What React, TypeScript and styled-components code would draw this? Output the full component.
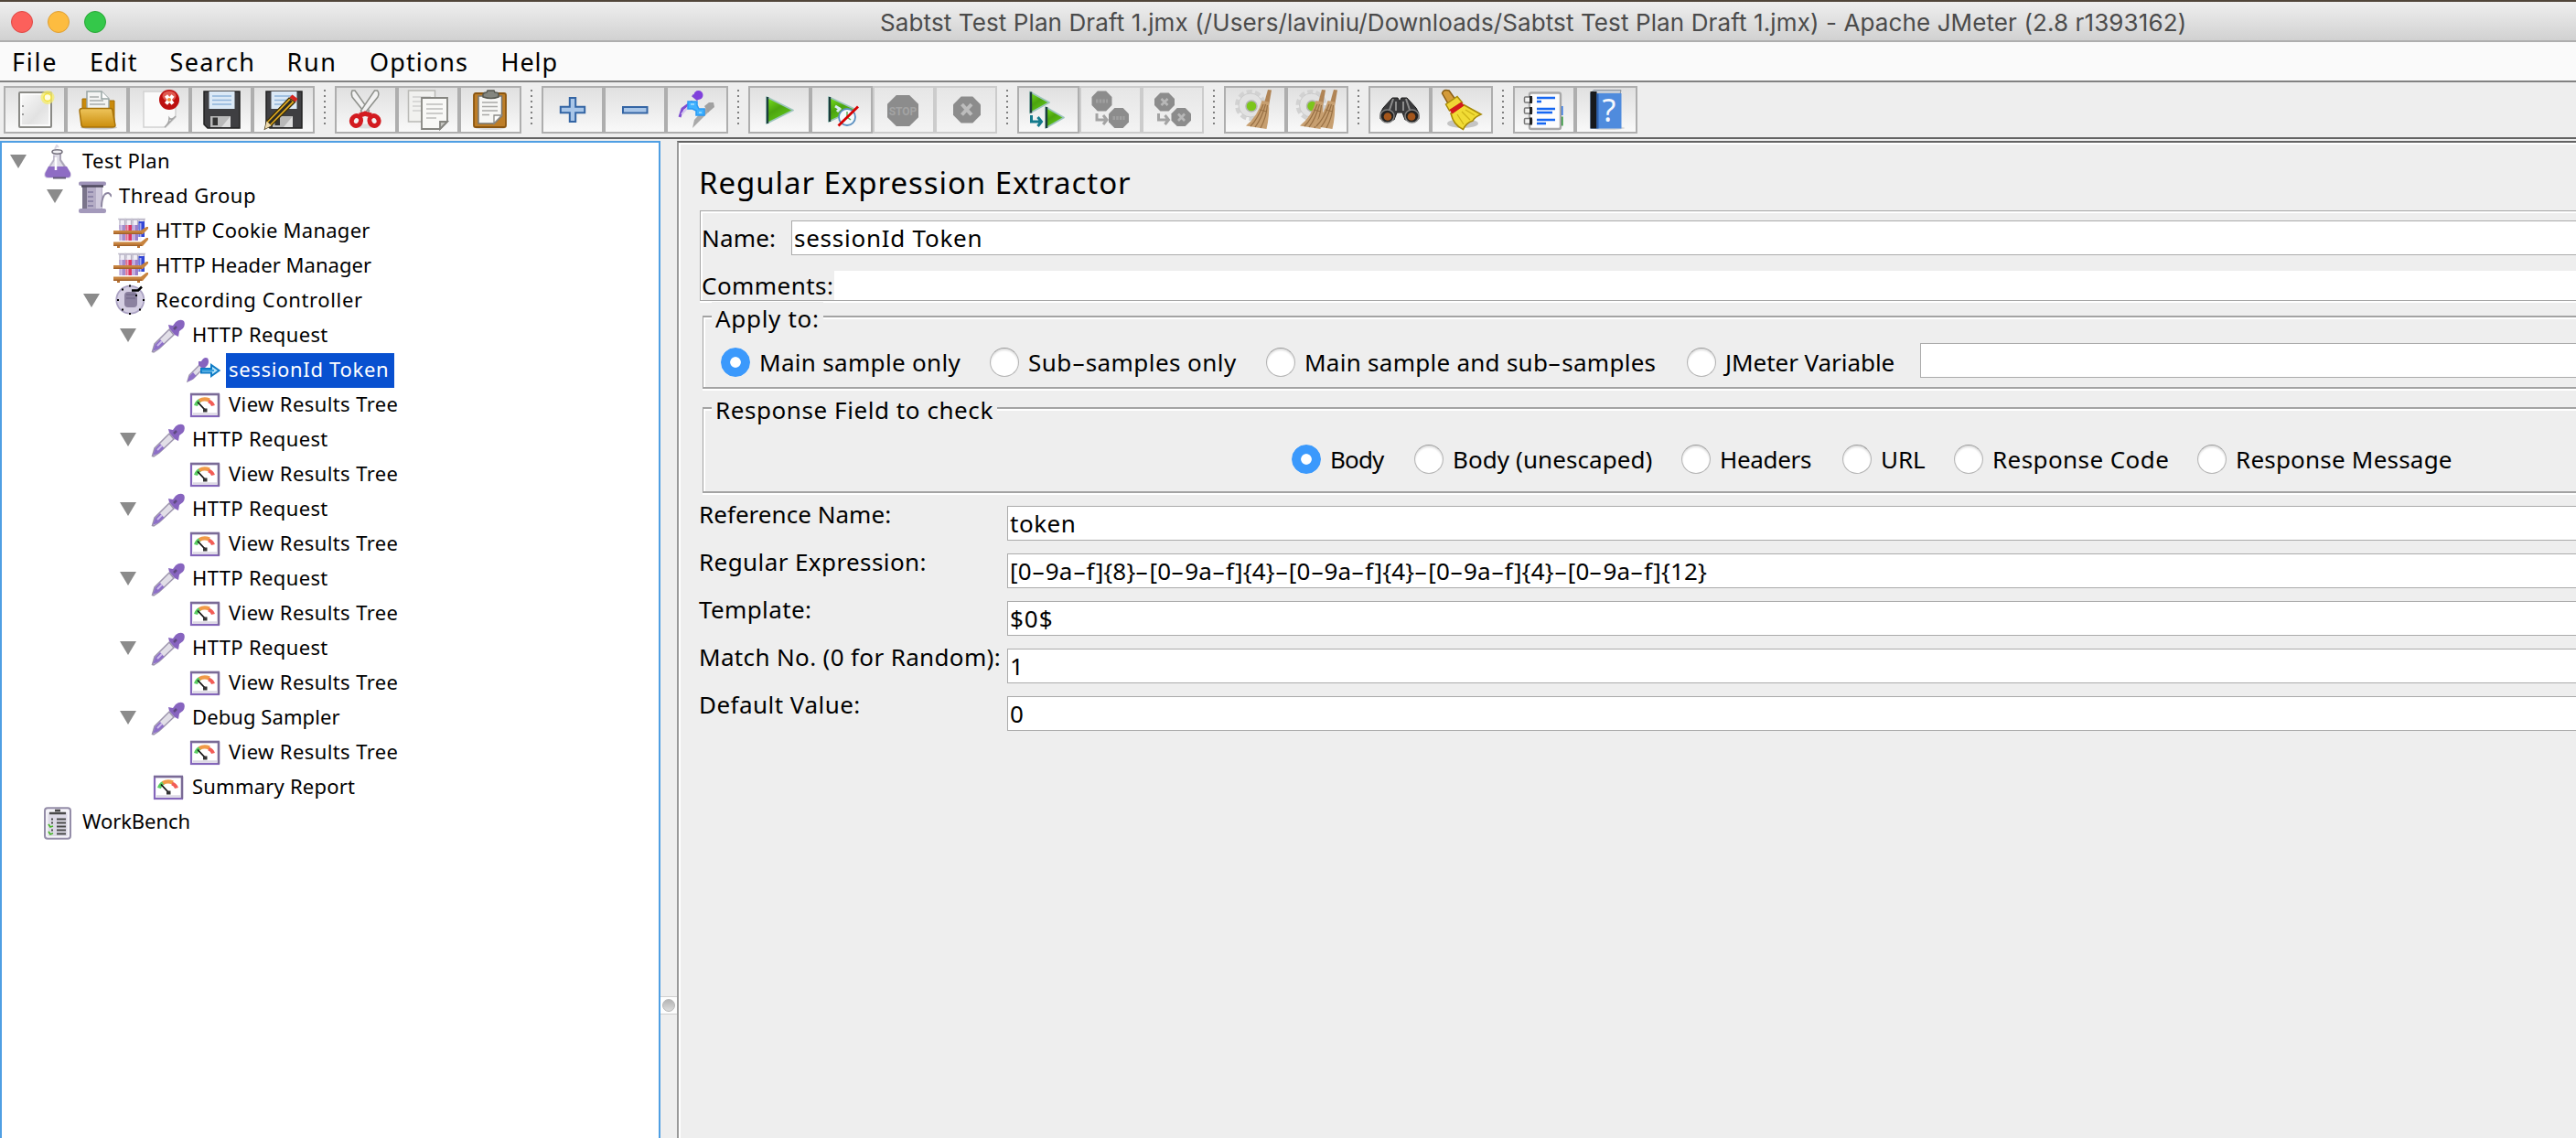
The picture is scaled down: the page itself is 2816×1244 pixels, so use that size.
import React from 'react';
import styled, { createGlobalStyle } from 'styled-components';

const GlobalStyle = createGlobalStyle`
  * { box-sizing: border-box; }
  body { margin: 0; background: #eeeeee; }
`;

const uiFont = '"Noto Sans", "Open Sans", sans-serif';

/* ---------- window frame ---------- */

const Window = styled.div`
  width: 2816px;
  height: 1244px;
  overflow: hidden;
  display: flex;
  flex-direction: column;
  background: #eeeeee;
  color: #000;
  font-family: ${uiFont};
`;

const TitleBar = styled.header`
  flex: none;
  display: flex;
  align-items: center;
  height: 46px;
  padding: 0 0 0 12px;
  border-top: 2px solid #51463a;
  border-bottom: 2px solid #aeaeae;
  background: linear-gradient(#efefef, #d1d1d1);
`;

const Lights = styled.div`
  display: flex;
  gap: 16px;
  width: 947px;
  padding-top: 2px;
`;

const Light = styled.span<{ $fill: string; $edge: string }>`
  width: 24px;
  height: 24px;
  border-radius: 50%;
  background: ${(p) => p.$fill};
  border: 1px solid ${(p) => p.$edge};
`;

const Title = styled.span`
  padding-left: 3px;
  padding-top: 3px;
  font: 26px/32px Inter, Roboto, sans-serif;
  letter-spacing: 0.11px;
  color: #4b4b4b;
  white-space: pre;
`;

const MenuBar = styled.nav`
  flex: none;
  display: flex;
  height: 44px;
  padding-left: 13px;
  border-bottom: 2px solid #828282;
  background: #fafafa;
`;

const MenuItem = styled.span<{ $w: number; $ls: number }>`
  width: ${(p) => p.$w}px;
  font-size: 27px;
  line-height: 43px;
  letter-spacing: ${(p) => p.$ls}px;
  white-space: pre;
`;

/* ---------- toolbar ---------- */

const ToolBar = styled.div`
  flex: none;
  display: flex;
  height: 62px;
  padding: 4px 0 0 4px;
  border-bottom: 2px solid #636363;
`;

const Group = styled.div`
  display: flex;
`;

const ToolButton = styled.span<{ $off?: boolean }>`
  display: block;
  width: 68px;
  height: 52px;
  border: 2px solid ${(p) => (p.$off ? '#cccccc' : '#aeaeae')};
  background: ${(p) => (p.$off ? 'linear-gradient(#e6e6e6, #f3f3f3)' : 'linear-gradient(#e0e0e0, #f9f9f9)')};
  svg { display: block; }
`;

const Dots = styled.span`
  width: 2px;
  height: 38px;
  margin: 4px 10px 0;
  background: repeating-linear-gradient(#808080 0 2px, transparent 2px 6px);
`;

/* ---------- body ---------- */

const Body = styled.div`
  flex: 1;
  display: flex;
  padding-top: 2px;
  min-height: 0;
`;

const Tree = styled.div`
  flex: none;
  width: 722px;
  height: 1200px;
  border: 2px solid #4f9fe3;
  background: #fff;
  padding-top: 2px;
`;

const TreeRow = styled.div<{ $depth: number }>`
  display: flex;
  height: 38px;
  padding-left: ${(p) => p.$depth * 40 + 9}px;
  > svg { flex: none; display: block; }
`;

const ArrowSlot = styled.span`
  flex: none;
  width: 33px;
  padding-top: 11px;
  svg { display: block; }
`;

const TreeLabel = styled.span<{ $ls: number; $selected?: boolean }>`
  height: 38px;
  margin-left: 5px;
  padding: 0 6px 0 3px;
  font-size: 22px;
  line-height: 35px;
  letter-spacing: ${(p) => p.$ls}px;
  white-space: pre;
  background: ${(p) => (p.$selected ? '#0850d0' : 'transparent')};
  color: ${(p) => (p.$selected ? '#fff' : '#000')};
`;

const Divider = styled.div`
  flex: none;
  width: 18px;
  padding-top: 935px;
`;

const Handle = styled.div`
  display: flex;
  align-items: center;
  justify-content: center;
  height: 20px;
  background: #fdfdfd;
  border-top: 1px solid #cfcfcf;
  border-bottom: 1px solid #cfcfcf;
  &::after {
    content: '';
    width: 12px;
    height: 12px;
    border-radius: 50%;
    background: linear-gradient(#b4b4b4, #dcdcdc);
    border: 1px solid #b6b6b6;
  }
`;

const Panel = styled.main`
  flex: 1;
  min-width: 0;
  height: 1200px;
  padding: 20px 0 0 23px;
  border-top: 2px solid #636363;
  border-left: 2px solid #999;
  box-shadow: inset 2px 2px 0 #fff;
  display: flex;
  flex-direction: column;
`;

const Heading = styled.h1`
  margin: 0 0 8px -1px;
  height: 46px;
  font-size: 33px;
  font-weight: 400;
  line-height: 47px;
  letter-spacing: 0.94px;
  white-space: pre;
`;

const NameBox = styled.section`
  height: 99px;
  padding-top: 10px;
  border: solid #a6a6a6;
  border-width: 1px 0 1px 1px;
  box-shadow: inset 2px 2px 0 #fff, 0 2px 0 #fff;
`;

const NameRow = styled.div<{ $h: number }>`
  display: flex;
  height: ${(p) => p.$h}px;
  padding-left: 1px;
  line-height: ${(p) => p.$h}px;
  & + & { margin-top: 17px; }
`;

const Label = styled.label<{ $w?: number; $ls?: number }>`
  flex: none;
  width: ${(p) => (p.$w ? p.$w + 'px' : 'auto')};
  font-size: 26px;
  letter-spacing: ${(p) => p.$ls ?? 0}px;
  white-space: pre;
`;

const Field = styled.div<{ $ls?: number }>`
  flex: 1;
  height: 38px;
  border: solid #ababab;
  border-width: 1px 0 1px 1px;
  background: #fff;
  padding-left: 2px;
  font-size: 26px;
  line-height: 36px;
  letter-spacing: ${(p) => p.$ls ?? 0}px;
  white-space: pre;
`;

const PlainField = styled.div`
  flex: 1;
  height: 32px;
  background: #fff;
`;

const Fieldset = styled.section<{ $h: number; $mt: number }>`
  height: ${(p) => p.$h}px;
  margin: ${(p) => p.$mt}px 0 0 3px;
  border: solid #a3a3a3;
  border-width: 2px 0 2px 1px;
  box-shadow: inset 2px 2px 0 #fff, 0 2px 0 #fff;
`;

const Legend = styled.div<{ $w: number; $ls: number }>`
  width: ${(p) => p.$w}px;
  height: 36px;
  margin: -17px 0 0 9px;
  padding-left: 4px;
  background: #eeeeee;
  font-size: 26px;
  line-height: 36px;
  letter-spacing: ${(p) => p.$ls}px;
  white-space: pre;
`;

const Radios = styled.div<{ $left: number; $top: number }>`
  display: flex;
  height: 38px;
  margin: ${(p) => p.$top}px 0 0 ${(p) => p.$left}px;
`;

const Option = styled.label<{ $w: number; $ls: number }>`
  flex: none;
  display: flex;
  gap: 10px;
  width: ${(p) => p.$w}px;
  font-size: 26px;
  line-height: 42px;
  letter-spacing: ${(p) => p.$ls}px;
  white-space: pre;
`;

const Radio = styled.span<{ $on?: boolean }>`
  flex: none;
  width: 32px;
  height: 32px;
  margin-top: 5px;
  border-radius: 50%;
  border: 1px solid ${(p) => (p.$on ? '#3b99fc' : '#b4b4b4')};
  border-top-color: ${(p) => (p.$on ? '#3b99fc' : '#999')};
  background: ${(p) => (p.$on ? 'radial-gradient(circle, #fff 0 5.4px, #3b99fc 6.2px)' : '#fff')};
  box-shadow: ${(p) => (p.$on ? 'none' : 'inset 0 2px 2px #e0e0e0')};
`;

const Form = styled.div`
  margin-top: 5px;
`;

const FormRow = styled.div`
  display: flex;
  height: 52px;
  line-height: 36px;
  margin-left: -1px;
  ${Field} { margin-top: 9px; }
`;

const Dash = styled.span`
  display: inline-block;
  width: 15px;
  padding-left: 3px;
  transform: scaleX(1.75);
`;

const dashed = (text: string) =>
  text.split('-').map((part, i) => (
    <React.Fragment key={i}>
      {i > 0 && <Dash>-</Dash>}
      {part}
    </React.Fragment>
  ));

/* ---------- toolbar icons, in 68x52 button coordinates ---------- */

const octagon = (x: number, y: number, w: number, h: number) => {
  const c = w * 0.29;
  return `M${x + c} ${y}H${x + w - c}L${x + w} ${y + c}V${y + h - c}L${x + w - c} ${y + h}H${x + c}L${x} ${y + h - c}V${y + c}Z`;
};

const Floppy = () => (
  <>
    <path d="M15 6H54V46H19L15 42Z" fill="#3f3f42" stroke="#222" strokeWidth="1.5" />
    <rect x="20.500" y="6" width="28" height="19" fill="#dbe9f6" />
    <path d="M24 11H45M24 15.500H45M24 20H45" stroke="#8fb4da" strokeWidth="1.600" />
    <path d="M22 33H44V45H22Z" fill="#b9b9b9" />
    <path d="M34 45L44 33V45Z" fill="#dedede" />
    <rect x="24.500" y="34.500" width="5.500" height="8.500" fill="#333" />
  </>
);

const Gear = ({ x }: { x: number }) => (
  <>
    <circle cx={x} cy="21" r="14.500" fill="none" stroke="#d2d2d2" strokeWidth="5" strokeDasharray="6 3.100" />
    <circle cx={x} cy="21" r="13" fill="#e2e2e2" stroke="#cacaca" />
    <circle cx={x + 1} cy="22" r="6" fill="#7cc51c" stroke="#b5b5b5" strokeWidth="1.500" />
  </>
);

const Besom = ({ x }: { x: number }) => (
  <g transform={`translate(${x} 0)`}>
    <path d="M48 4L52 4.500L49 22H43Z" fill="#b08455" />
    <path d="M41.500 16L49 17.500Q50 32 46.500 47L24 43.500Q37 33 41.500 16Z" fill="#c79f70" />
    <path d="M43 20Q37 36 29 44M45.500 20Q41 36 34 45M47.500 21Q46 35 40 46M39 26L47 28" stroke="#987044" strokeWidth="1.200" fill="none" />
  </g>
);

const Tri = ({ x, y, w, h }: { x: number; y: number; w: number; h: number }) => (
  <>
    <path d={`M${x} ${y}L${x + w} ${y + h / 2}L${x} ${y + h}Z`} fill="url(#tri)" stroke="#9cc4bd" strokeWidth="1.800" strokeLinejoin="round" />
    <path d={`M${x + 1} ${y}V${y + h}`} stroke="#1c3d3c" strokeWidth="2.400" />
  </>
);

const ElbowArrow = ({ x, y, fill }: { x: number; y: number; fill: string }) => (
  <path d={`M${x} ${y}V${y + 7}H${x + 9}M${x + 7} ${y + 2}L${x + 11} ${y + 7}L${x + 7} ${y + 12}`} stroke={fill} strokeWidth="3" fill="none" />
);

const grey = '#8c8c8c';

const icons: Record<string, React.ReactNode> = {
  new: (
    <>
      <rect x="17" y="7" width="35" height="38" rx="1" fill="url(#paper)" stroke="#8a8a86" strokeWidth="2" />
      <rect x="19" y="9" width="31" height="34" fill="none" stroke="#fff" strokeWidth="1.500" />
      <path d="M20 22h2M20 31h2" stroke="#999" strokeWidth="2" />
      <circle cx="48" cy="12.500" r="7.500" fill="#f5ec6a" opacity="0.750" />
      <circle cx="48" cy="12.500" r="4" fill="#fffde0" stroke="#f3e13c" strokeWidth="1.500" />
    </>
  ),
  open: (
    <>
      <ellipse cx="36" cy="45.500" rx="20" ry="2" fill="#c9c9c9" />
      <path d="M18 14H28L31 16H53V44H18Z" fill="#c98a0c" stroke="#a26d05" />
      <path d="M23 27V6H39L47 14V27Z" fill="#f3f4f3" stroke="#98a4a4" strokeWidth="1.500" />
      <path d="M39 6V14H47" fill="#fff" stroke="#98a4a4" strokeWidth="1.500" />
      <path d="M26 12H36M26 16H41M26 20H43" stroke="#a8acac" strokeWidth="1.500" />
      <path d="M15 27Q15 24.500 18 24.500H49Q51 24.500 51 27L54 43Q54 45 51 45H20Q17.500 45 17 43Z" fill="url(#folder)" stroke="#a8730a" strokeWidth="1.500" />
    </>
  ),
  close: (
    <>
      <path d="M17 6H52V34L41 45H17Z" fill="#fafafa" stroke="#d2d2d2" strokeWidth="1.500" />
      <path d="M52 33Q47 38 45 35Q45 41 40 45Z" fill="#fff" stroke="#a5a5a5" strokeWidth="1.500" />
      <circle cx="45" cy="15" r="11" fill="#bd0f0f" />
      <ellipse cx="45" cy="11" rx="7.500" ry="5.500" fill="#e05a50" />
      <path d="M41.500 10.500L49 19.500M49 10.500L41.500 19.500" stroke="#fff" strokeWidth="4" />
      <circle cx="45" cy="15" r="2" fill="#f28a38" />
    </>
  ),
  save: <Floppy />,
  saveAs: (
    <>
      <Floppy />
      <path d="M40 13L46.500 17.500L21 43L13.500 47L15.500 38.500Z" fill="#e8b020" stroke="#3a2d08" strokeWidth="1.300" />
      <path d="M42.500 16L18 41" stroke="#2c2a22" strokeWidth="3" />
      <path d="M40.500 12.500L43.500 9.500L49.500 14L47 17.500Z" fill="#d5241f" />
      <path d="M15.500 38.500L20.500 43.500L13.500 47Z" fill="#ecd9b0" />
    </>
  ),
  cut: (
    <>
      <ellipse cx="34" cy="44" rx="14" ry="2.500" fill="#dedede" />
      <path d="M19 5Q17.500 8 19 12L35 32L37.500 27L22 5Z" fill="#f2f2f2" stroke="#8f918c" strokeWidth="1.500" />
      <path d="M46.500 5Q49 8 47 12L31 32L28.500 27L43.500 5Z" fill="#f2f2f2" stroke="#8f918c" strokeWidth="1.500" />
      <path d="M34 30L27 32M32 30L40 32" stroke="#d31b20" strokeWidth="5" />
      <ellipse cx="23.500" cy="38" rx="5" ry="5.500" fill="#f2f2f2" stroke="#d31b20" strokeWidth="5" transform="rotate(25 23.500 38)" />
      <ellipse cx="43" cy="38" rx="5" ry="5.500" fill="#f2f2f2" stroke="#d31b20" strokeWidth="5" transform="rotate(-25 43 38)" />
    </>
  ),
  copy: (
    <>
      <rect x="12.500" y="5" width="29" height="34" fill="#f1f1ef" stroke="#b9b9b5" strokeWidth="1.500" />
      <path d="M17 12H37M17 17H26M17 22H26M17 27H26" stroke="#cfcfcf" strokeWidth="1.500" />
      <path d="M27 13H55V39L47 47H27Z" fill="#f8f8f6" stroke="#858580" strokeWidth="1.800" />
      <path d="M55 39H47V47Z" fill="#c7c7c3" stroke="#858580" strokeWidth="1.800" />
      <path d="M32 20H50M32 25H50M32 30H50M32 35H43" stroke="#bcbcba" strokeWidth="1.600" />
    </>
  ),
  paste: (
    <>
      <ellipse cx="34" cy="46" rx="16" ry="2" fill="#ddd" />
      <rect x="16" y="8" width="35" height="37" rx="2" fill="#bd7d27" stroke="#8a5510" strokeWidth="1.800" />
      <path d="M21 11H46.500V33L38 41H21Z" fill="#f7f7f5" stroke="#77756f" strokeWidth="1.500" />
      <path d="M46.500 32H38V41Z" fill="#fff" stroke="#8a8a86" strokeWidth="1.300" />
      <path d="M25 18H42M25 22.500H42M25 27H42M25 31.500H33" stroke="#a9a9a7" strokeWidth="1.600" />
      <path d="M26 12V9Q27 7 30 7L31 5H38L39 7Q43 7 43 9V12Q35 15 26 12Z" fill="#84867f" stroke="#55574f" strokeWidth="1.500" />
    </>
  ),
  plus: <path d="M30.800 13H37.200V22.800H47.200V29.200H37.200V39H30.800V29.200H20.800V22.800H30.800Z" fill="#a9c6e8" stroke="#3465a4" strokeWidth="2" />,
  minus: <rect x="21" y="23" width="26.500" height="6.500" fill="#a9c6e8" stroke="#3465a4" strokeWidth="2" />,
  toggle: (
    <>
      <path d="M15 34L18 25L29 17" stroke="#7f4dd0" strokeWidth="3" fill="none" />
      <path d="M17 31L26 21" stroke="#d3c4ee" strokeWidth="2" />
      <path d="M29 10L35 15" stroke="#7f4dd0" strokeWidth="3" />
      <circle cx="35.500" cy="10" r="5" fill="#8040dc" />
      <path d="M29 46L31 37L43 24L47 28L37 38Z" fill="#a9a9a9" />
      <path d="M42 22L47 18L52 18L53 23L46 29Z" fill="#a0a0a0" />
      <path d="M24 17H34V21L36 25H42V32H33V27L29 25H24Z" fill="#3fb2ff" stroke="#2a9af5" strokeWidth="1.500" />
      <path d="M27 20H31M36 29H39" stroke="#8ed4ff" strokeWidth="2" />
    </>
  ),
  play: <Tri x={20} y={12} w={29} h={29} />,
  playNoTimers: (
    <>
      <Tri x={20} y={12} w={29} h={27} />
      <path d="M27 22L32 25M33 24L29 28" stroke="#d9ecf5" strokeWidth="3" />
      <circle cx="40" cy="34" r="9" fill="#f4fafd" stroke="#5a8fc0" strokeWidth="1.800" />
      <path d="M40 28V34L44 37" stroke="#5fae5a" strokeWidth="1.500" fill="none" />
      <path d="M30.500 43.500L52 22.500" stroke="#d60000" strokeWidth="2.800" />
    </>
  ),
  stop: (
    <>
      <path d={octagon(16, 10, 34, 34)} fill={grey} />
      <text x="33" y="31.500" textAnchor="middle" fontFamily="Roboto, sans-serif" fontSize="12" fontWeight="700" fill="#a3a3a3">STOP</text>
    </>
  ),
  shutdown: (
    <>
      <path d={octagon(20, 11.500, 30, 29)} fill={grey} />
      <path d="M29.500 20L40 31.500M40 20L29.500 31.500" stroke="#bdbdbd" strokeWidth="4" />
    </>
  ),
  remoteStart: (
    <>
      <Tri x={14} y={6.500} w={21} h={23} />
      <Tri x={31} y={23} w={20} h={23} />
      <ElbowArrow x={15.5} y={32} fill="#147a8c" />
    </>
  ),
  remoteStop: (
    <>
      <path d={octagon(13.500, 5.500, 22, 22)} fill={grey} />
      <path d={octagon(32, 24, 22, 22)} fill={grey} />
      <path d="M18 16.500H31M36.500 35H49.500" stroke="#a0a0a0" strokeWidth="4" strokeDasharray="2.500 1.200" />
      <ElbowArrow x={19} y={30} fill="#a3a3a3" />
    </>
  ),
  remoteShutdown: (
    <>
      <path d={octagon(14, 7.500, 22, 20)} fill={grey} />
      <path d={octagon(32.500, 24, 21.500, 20)} fill={grey} />
      <path d="M21.500 14L28.500 21M28.500 14L21.500 21M40 30.500L47 38M47 30.500L40 38" stroke="#b8b8b8" strokeWidth="2.600" />
      <ElbowArrow x={18.5} y={30} fill="#a3a3a3" />
    </>
  ),
  clear: (
    <>
      <Gear x={29} />
      <Besom x={0} />
    </>
  ),
  clearAll: (
    <>
      <Gear x={27.5} />
      <Besom x={-9} />
      <Besom x={4} />
    </>
  ),
  search: (
    <>
      <path d="M26 13H32L34 17L36 13H42L52 24Q56 29 55 36L40 37L37 29H31L28 37L13 36Q12 29 16 24Z" fill="#3a3a3c" stroke="#1c1c1c" />
      <path d="M27 14L23 26M41 14L45 26M30 17V27M38 17V27" stroke="#8c8c8c" strokeWidth="2" />
      <ellipse cx="20.500" cy="33" rx="7.500" ry="7" fill="#222" stroke="#808080" strokeWidth="1.500" />
      <ellipse cx="47.500" cy="33" rx="7.500" ry="7" fill="#222" stroke="#808080" strokeWidth="1.500" />
      <ellipse cx="21" cy="33.500" rx="4.300" ry="4.300" fill="#a4561c" />
      <ellipse cx="47" cy="33.500" rx="4.300" ry="4.300" fill="#a4561c" />
    </>
  ),
  sweep: (
    <>
      <ellipse cx="35" cy="41" rx="17" ry="5" fill="#c4c4c4" />
      <path d="M12.500 8Q14 3 20 5L28 16L20 21Z" fill="#d49b3a" stroke="#8a5e14" strokeWidth="1.500" />
      <path d="M16.500 20L29 11.500L34.500 18L20.500 27Z" fill="#f0d435" stroke="#a78a08" strokeWidth="1.500" />
      <path d="M22 30L36 20.500L55 31Q48 34 46 38Q39 40 35.500 47.500Q25 43 22 30Z" fill="#f1dc35" stroke="#a78a08" strokeWidth="1.600" />
      <path d="M29 31L36 42M34 28L43 37M38 26L48 32" stroke="#cdb317" strokeWidth="1.300" />
      <path d="M20.500 26L33.500 17.500L36.500 21.500L23.500 30.500Z" fill="#d3191c" />
    </>
  ),
  list: (
    <>
      <rect x="50" y="22" width="4.500" height="10" fill="#1768e8" />
      <rect x="50" y="33.500" width="4.500" height="10" fill="#0c8a18" />
      <rect x="18" y="7.500" width="34" height="39.500" rx="2" fill="#fdfdfd" stroke="#a8a8a8" strokeWidth="2.400" />
      {[15, 27, 38.5].map((y) => (
        <g key={y}>
          <rect x="12.500" y={y - 3} width="8" height="6" rx="1" fill="#f3f3f3" stroke="#777" strokeWidth="1.500" />
          <rect x="18" y={y - 4} width="3" height="8" fill="#222" />
        </g>
      ))}
      <path d="M26 13H46M26 25H46M26 37H46" stroke="#1667f2" strokeWidth="2.600" />
      <path d="M26 17H31M26 29H43M26 41H36" stroke="#1667f2" strokeWidth="2.400" />
    </>
  ),
  help: (
    <>
      <ellipse cx="36" cy="46" rx="18" ry="2" fill="#d8d8d8" />
      <path d="M17 8L20 4.500H50L49 9H17Z" fill="#c5ccd6" stroke="#8a929c" />
      <rect x="16.500" y="8" width="34" height="38.500" fill="#4f8bdd" />
      <rect x="16.500" y="6" width="7" height="40.500" fill="#17191d" />
      <rect x="23.500" y="8.500" width="2" height="38" fill="#2b5fae" />
      <text x="37" y="39" textAnchor="middle" fontFamily='"Noto Sans", sans-serif' fontSize="34" fill="#f5f8fd">?</text>
    </>
  ),
};

const toolGroups: string[][] = [
  ['new', 'open', 'close', 'save', 'saveAs'],
  ['cut', 'copy', 'paste'],
  ['plus', 'minus', 'toggle'],
  ['play', 'playNoTimers', 'stop', 'shutdown'],
  ['remoteStart', 'remoteStop', 'remoteShutdown'],
  ['clear', 'clearAll'],
  ['search', 'sweep'],
  ['list', 'help'],
];

const disabled = new Set(['stop', 'shutdown', 'remoteStop', 'remoteShutdown']);

const Gradients = () => (
  <defs>
    <linearGradient id="tri" x1="0" y1="0" x2="0.600" y2="1">
      <stop offset="0" stopColor="#7be51e" />
      <stop offset="0.500" stopColor="#4ca40f" />
      <stop offset="1" stopColor="#63cc1c" />
    </linearGradient>
    <linearGradient id="paper" x1="0" y1="0" x2="1" y2="1">
      <stop offset="0" stopColor="#fbfbfb" />
      <stop offset="0.600" stopColor="#e2e2e2" />
      <stop offset="1" stopColor="#f4f4f4" />
    </linearGradient>
    <linearGradient id="folder" x1="0" y1="0" x2="0" y2="1">
      <stop offset="0" stopColor="#eec55c" />
      <stop offset="1" stopColor="#cb8d0c" />
    </linearGradient>
  </defs>
);

/* ---------- tree icons, 38x38 ---------- */

const treeIcons: Record<string, React.ReactNode> = {
  plan: (
    <>
      <path d="M16 5L18 1L20 3" stroke="#d9d5e2" strokeWidth="2" fill="none" />
      <path d="M14 9H23V16L33.500 31Q35 37 30 37H9Q3 37 4.500 31L14 16Z" fill="#dedbe6" />
      <path d="M22 10V17L30 29" stroke="#aaa5b6" strokeWidth="2" fill="none" />
      <path d="M15 12V17L9 26" stroke="#b9b4c6" strokeWidth="1.600" fill="none" />
      <ellipse cx="18.500" cy="8" rx="5.500" ry="2.200" fill="#f1f0f4" stroke="#77737f" strokeWidth="1.600" />
      <path d="M9 24H29L33 31Q34 36 30 36H9Q4 36 5.500 31Z" fill="#8e6cc4" />
      <path d="M17 14V28" stroke="#fff" strokeWidth="2.500" />
      <path d="M14 36.500H28" stroke="#635a76" strokeWidth="2" />
    </>
  ),
  thread: (
    <>
      <path d="M30 17Q35 12 38 19" stroke="#8d86a0" strokeWidth="2" fill="none" />
      <rect x="6" y="6" width="22" height="29" fill="#b5adc6" />
      <rect x="6" y="6" width="5" height="28" fill="#7b758b" />
      <rect x="21" y="6" width="6" height="28" fill="#cfc9dc" />
      <path d="M27 30Q27 22 30 17" stroke="#8d86a0" strokeWidth="2" fill="none" />
      <rect x="2" y="2.500" width="30" height="4.500" rx="2" fill="#9e93b8" />
      <path d="M5 7.500H29" stroke="#4f4a5e" strokeWidth="2.500" />
      <rect x="2" y="32" width="30" height="5" rx="2" fill="#a399bb" />
      <path d="M12 14H18M12 19H18M12 24H18M12 29H18" stroke="#8179a0" strokeWidth="1.600" />
    </>
  ),
  rack: (
    <>
      {[5, 12, 19, 26].map((x, i) => (
        <g key={x}>
          <path d={`M${x} 5.500H${x + 9}`} stroke="#cbc8d4" strokeWidth="1.600" />
          <rect x={x + 2} y="6" width="5.500" height="10" fill="#f1eff6" stroke="#b3aec2" strokeWidth="1.200" />
          <rect x={x + 1.5} y={i === 3 ? 8 : 12} width="6.500" height="17" fill={['#a38ccc', '#dd3560', '#9a7fca', '#3347d6'][i]} />
          <rect x={x + 2.5} y="10" width="2" height="19" fill="#ece6f7" opacity="0.650" />
        </g>
      ))}
      <path d="M0 18H30L36 14H38V16L32 22H0Z" fill="#c8843f" />
      <path d="M0 30.500H30L36 26H38V28L32 35H0Z" fill="#c8843f" />
      <path d="M0 21.300H31M0 34.300H31" stroke="#a3622a" strokeWidth="1.500" />
      <path d="M4 36H7M26 36H29" stroke="#b87333" strokeWidth="2" />
    </>
  ),
  recorder: (
    <>
      <circle cx="18.300" cy="17.700" r="15" fill="#d4cee2" stroke="#aca3c4" strokeWidth="1.800" />
      <rect x="12" y="9" width="14" height="17" rx="4" fill="#8b819f" />
      <path d="M14 12H24M14 16H24" stroke="#7b7191" strokeWidth="2" />
      <path d="M20 7.500H27L31 3.500" stroke="#000" strokeWidth="2.500" fill="none" />
      <path d="M17 2.500H19M9 6.500H11M4 18H6M9 28.500H11M17 33H19M28 28.500H30M32 18H34M24 13H26" stroke="#000" strokeWidth="2" />
    </>
  ),
  sampler: (
    <>
      <path d="M2.500 36.500L5 28L21 12L26 18L10 33L4 37Z" fill="#e2dfe8" stroke="#9b93ab" strokeWidth="1.500" />
      <path d="M3 36L5.500 28.500L11 23L15.500 28L9 33.500Z" fill="#8d6fc8" />
      <path d="M8 30L13 25" stroke="#cdbdeb" strokeWidth="2" />
      <path d="M20 7L25 8L28 4Q33 0 37 3Q39 7 36 11L32 14L31 20L27 18L21 11Z" fill="#8764bf" />
      <path d="M26 12L29 9" stroke="#5e4a80" strokeWidth="2.500" />
    </>
  ),
  extractor: (
    <>
      <path d="M1 31L3 24L14 13L18 17L7 28Z" fill="#e0dce8" stroke="#9b93ab" strokeWidth="1.400" />
      <path d="M1 31L3 25L7 21L10.500 25L6 29Z" fill="#8d6fc8" />
      <path d="M13 9L16 9Q19 3.500 23 5.500Q25 9 23 13L20 16L18 17L13 13Z" fill="#8764bf" />
      <path d="M16 17H27V13L35.500 19L27 25V21.500H16Z" fill="#b5e3f8" stroke="#0f7cc6" strokeWidth="2" />
      <path d="M16 19H30" stroke="#1a90d8" strokeWidth="1.600" />
    </>
  ),
  listener: (
    <>
      <rect x="5" y="7" width="30" height="24" fill="#fff" stroke="#8466bb" strokeWidth="2.200" />
      <path d="M4 7H36M35 7V31" stroke="#7a6b96" strokeWidth="2.400" />
      <path d="M7 28.500H33" stroke="#dcd9e4" strokeWidth="2.500" />
      <path d="M10 19.500Q11 15.500 15 13.500" stroke="#58cc62" strokeWidth="4" fill="none" />
      <path d="M14 14Q19 11 25 13.500" stroke="#f09a48" strokeWidth="4.200" fill="none" />
      <path d="M24 14.500Q28 16 29 19.500" stroke="#f25c56" strokeWidth="4" fill="none" />
      <path d="M12 15.500L20 24" stroke="#111" strokeWidth="1.800" />
      <rect x="18" y="22.500" width="4.500" height="4" fill="#333" />
    </>
  ),
  bench: (
    <>
      <rect x="5" y="3.200" width="28" height="33.600" rx="3" fill="#f4f3f8" stroke="#948da8" strokeWidth="2" />
      <rect x="8.500" y="8" width="21" height="26" fill="#dddae6" />
      <path d="M10 9H28M16 6H22" stroke="#4a4a4a" strokeWidth="2.600" />
      <path d="M18 15.500H28M18 19.500H28M18 23.500H28M18 27.500H28M18 31.500H28" stroke="#4a4a4a" strokeWidth="1.800" />
      <path d="M12 15.500H14M12 19.500H14M12 27.500H14" stroke="#4a4a4a" strokeWidth="1.800" />
      <path d="M9 21L11 24L14 23M9 29L11 32L14 31" stroke="#49b52c" strokeWidth="1.800" fill="none" />
    </>
  ),
};

interface TreeNode {
  depth: number;
  icon: string;
  label: string;
  ls: number;
  open?: boolean;
  selected?: boolean;
}

const request: TreeNode = { depth: 3, icon: 'sampler', label: 'HTTP Request', ls: 0.36, open: true };
const results: TreeNode = { depth: 4, icon: 'listener', label: 'View Results Tree', ls: 0.4 };

const nodes: TreeNode[] = [
  { depth: 0, icon: 'plan', label: 'Test Plan', ls: 0.42, open: true },
  { depth: 1, icon: 'thread', label: 'Thread Group', ls: 0.54, open: true },
  { depth: 2, icon: 'rack', label: 'HTTP Cookie Manager', ls: 0.27 },
  { depth: 2, icon: 'rack', label: 'HTTP Header Manager', ls: 0.04 },
  { depth: 2, icon: 'recorder', label: 'Recording Controller', ls: 0.62, open: true },
  request,
  { depth: 4, icon: 'extractor', label: 'sessionId Token', ls: 0.68, selected: true },
  results,
  request,
  results,
  request,
  results,
  request,
  results,
  request,
  results,
  { depth: 3, icon: 'sampler', label: 'Debug Sampler', ls: 0.08, open: true },
  results,
  { depth: 3, icon: 'listener', label: 'Summary Report', ls: 0.22 },
  { depth: 0, icon: 'bench', label: 'WorkBench', ls: -0.08 },
];

const menus: [string, number, number][] = [
  ['File', 85, 1.79],
  ['Edit', 87.5, 1.07],
  ['Search', 128, 1.41],
  ['Run', 90.5, 1.61],
  ['Options', 143.5, 1.1],
  ['Help', 80, 0.93],
];

const fields: [string, number, string, number][] = [
  ['Reference Name:', 0.04, 'token', 0.51],
  ['Regular Expression:', 0.41, '[0-9a-f]{8}-[0-9a-f]{4}-[0-9a-f]{4}-[0-9a-f]{4}-[0-9a-f]{12}', 0.15],
  ['Template:', 0.38, '$0$', 0.98],
  ['Match No. (0 for Random):', 0.35, '1', 0],
  ['Default Value:', 0.47, '0', 0],
];

const applyTo: [string, number, number][] = [
  ['Main sample only', 294, 0.32],
  ['Sub-samples only', 302, 0.44],
  ['Main sample and sub-samples', 460, 0.27],
  ['JMeter Variable', 255, -0.05],
];

const responseField: [string, number, number][] = [
  ['Body', 134, -0.87],
  ['Body (unescaped)', 292, 0.08],
  ['Headers', 176, -0.32],
  ['URL', 122, -0.09],
  ['Response Code', 266, 0.42],
  ['Response Message', 290, 0.21],
];

export default function App() {
  return (
    <Window>
      <GlobalStyle />
      <TitleBar>
        <Lights>
          <Light $fill="#fc605b" $edge="#df4744" />
          <Light $fill="#fdbc40" $edge="#de9f34" />
          <Light $fill="#34c84a" $edge="#28a735" />
        </Lights>
        <Title>Sabtst Test Plan Draft 1.jmx (/Users/laviniu/Downloads/Sabtst Test Plan Draft 1.jmx) - Apache JMeter (2.8 r1393162)</Title>
      </TitleBar>
      <MenuBar>
        {menus.map(([name, w, ls]) => (
          <MenuItem key={name} $w={w} $ls={ls}>{name}</MenuItem>
        ))}
      </MenuBar>
      <ToolBar>
        {toolGroups.map((group, g) => (
          <React.Fragment key={g}>
            {g > 0 && <Dots />}
            <Group>
              {group.map((name) => (
                <ToolButton key={name} $off={disabled.has(name)}>
                  <svg width="64" height="48" viewBox="2 2 64 48">
                    {name === 'new' && <Gradients />}
                    {icons[name]}
                  </svg>
                </ToolButton>
              ))}
            </Group>
          </React.Fragment>
        ))}
      </ToolBar>
      <Body>
        <Tree>
          {nodes.map((n, i) => (
            <TreeRow key={i} $depth={n.depth}>
              <ArrowSlot>
                {n.open && (
                  <svg width="18" height="15" viewBox="0 0 18 15">
                    <path d="M0 0H18L9 15Z" fill="#8b8b8b" />
                  </svg>
                )}
              </ArrowSlot>
              <svg width="38" height="38" viewBox="0 0 38 38">{treeIcons[n.icon]}</svg>
              <TreeLabel $ls={n.ls} $selected={n.selected}>{n.label}</TreeLabel>
            </TreeRow>
          ))}
        </Tree>
        <Divider>
          <Handle />
        </Divider>
        <Panel>
          <Heading>Regular Expression Extractor</Heading>
          <NameBox>
            <NameRow $h={38}>
              <Label $w={98} $ls={0.19}>Name:</Label>
              <Field $ls={0.75}>sessionId Token</Field>
            </NameRow>
            <NameRow $h={32}>
              <Label $w={145} $ls={0.46}>Comments:</Label>
              <PlainField />
            </NameRow>
          </NameBox>
          <Fieldset $h={80} $mt={16}>
            <Legend $w={122} $ls={0.7}>Apply to:</Legend>
            <Radios $left={19} $top={9}>
              {applyTo.map(([name, w, ls], i) => (
                <Option key={name} $w={w} $ls={ls}>
                  <Radio $on={i === 0} />
                  <span>{dashed(name)}</span>
                </Option>
              ))}
              <Field />
            </Radios>
          </Fieldset>
          <Fieldset $h={94} $mt={20}>
            <Legend $w={312} $ls={0.57}>Response Field to check</Legend>
            <Radios $left={643} $top={15}>
              {responseField.map(([name, w, ls], i) => (
                <Option key={name} $w={w} $ls={ls}>
                  <Radio $on={i === 0} />
                  <span>{name}</span>
                </Option>
              ))}
            </Radios>
          </Fieldset>
          <Form>
            {fields.map(([name, ls, value, vls]) => (
              <FormRow key={name}>
                <Label $w={337} $ls={ls}>{name}</Label>
                <Field $ls={vls}>{dashed(value)}</Field>
              </FormRow>
            ))}
          </Form>
        </Panel>
      </Body>
    </Window>
  );
}
